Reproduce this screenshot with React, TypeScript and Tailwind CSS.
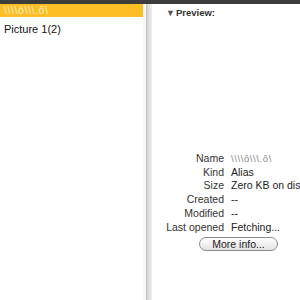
export default function App() {
  const info = [
    { label: 'Name', value: '\\\\\\\\ô\\\\\\.ô\\', faint: true },
    { label: 'Kind', value: 'Alias' },
    { label: 'Size', value: 'Zero KB on disk' },
    { label: 'Created', value: '--' },
    { label: 'Modified', value: '--' },
    { label: 'Last opened', value: 'Fetching...' },
  ];

  return (
    <div
      className="w-[300px] h-[300px] flex flex-col bg-white overflow-hidden"
      style={{ fontFamily: '"Liberation Sans", Arial, sans-serif' }}
    >
      {/* top bar */}
      <div className="h-[4px] bg-[#3c3c3c] shrink-0" />

      <div className="flex flex-1 min-h-0">
        {/* file list */}
        <div className="w-[143px] shrink-0 flex flex-col">
          <div className="h-[13px] bg-[#fdbd24] flex items-center pl-[4px] text-[10.5px] tracking-[0.6px] text-[#fff1c8] whitespace-nowrap">
            \\\\ô\\\.ô\
          </div>
          <div className="h-[24px] flex items-center pl-[4px] text-[11px] text-[#111]">
            Picture 1(2)
          </div>
        </div>

        {/* divider */}
        <div className="w-[9px] shrink-0 flex">
          <div className="w-[3px] bg-[#f6f6f6]" />
          <div className="w-[1px] bg-[#c4c4c4]" />
          <div className="flex-1 bg-gradient-to-r from-[#d4d4d4] to-[#f0f0f0]" />
        </div>

        {/* preview panel */}
        <div className="flex-1 flex flex-col pt-[3px]">
          <div className="h-[13px] flex items-center pl-[14px] text-[9.5px] font-bold text-[#333]">
            <span className="text-[9px] mr-[1px] text-[#555]">▼</span>
            Preview:
          </div>

          <div className="mt-[132px] flex flex-col text-[10.5px] leading-[13.7px]">
            {info.map((row) => (
              <div key={row.label} className="flex whitespace-nowrap">
                <span className="w-[72px] text-right text-[#333]">{row.label}</span>
                <span
                  className={
                    row.faint
                      ? 'ml-[7px] text-[9.5px] tracking-[0.6px] text-[#888]'
                      : 'ml-[7px] text-[#222]'
                  }
                >
                  {row.value}
                </span>
              </div>
            ))}
          </div>

          <div className="mt-[3px] pl-[47px] flex">
            <button className="w-[79px] h-[14px] rounded-full border border-[#8a8a8a] bg-gradient-to-b from-white to-[#e2e2e2] text-[10.5px] text-[#222] leading-none">
              More info...
            </button>
          </div>
        </div>
      </div>
    </div>
  );
}
